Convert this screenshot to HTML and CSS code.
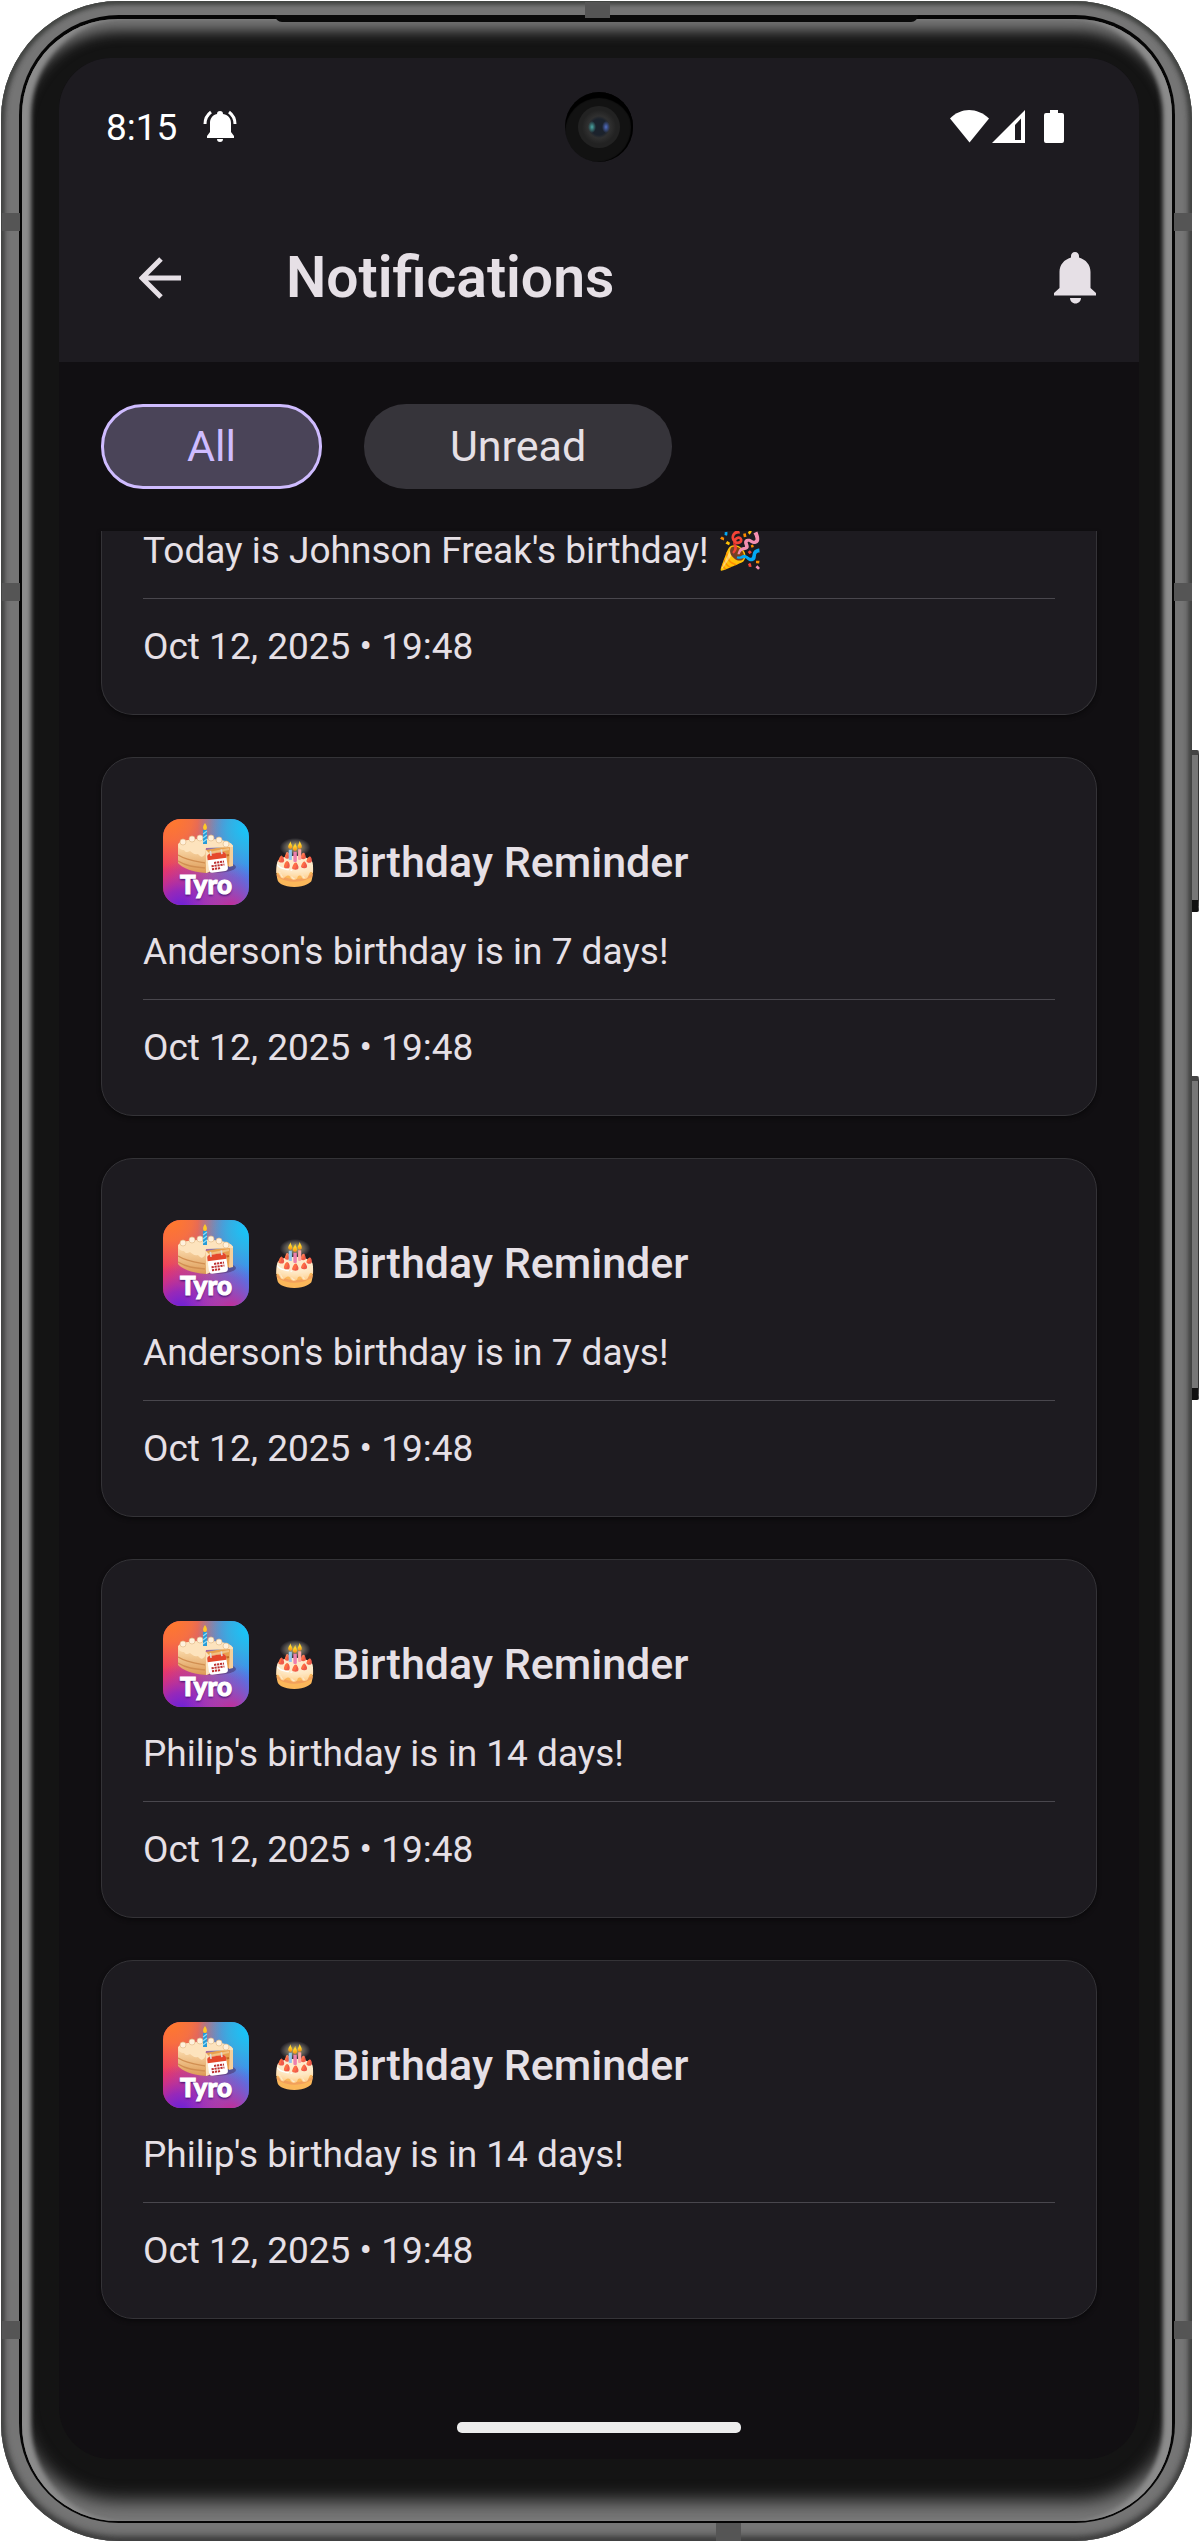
FILE: index.html
```html
<!DOCTYPE html>
<html lang="en">
<head>
<meta charset="utf-8">
<meta name="viewport" content="width=device-width, initial-scale=1">
<title>Notifications</title>
<link rel="stylesheet" href="styles.css">
</head>
<body>
<svg class="sprite" aria-hidden="true">
  <defs>
    <linearGradient id="bg" x1="0" y1="0" x2="1" y2="0"><stop offset="0" stop-color="#f0385e"/><stop offset=".5" stop-color="#b0569c"/><stop offset="1" stop-color="#3f86f0"/></linearGradient>
    <radialGradient id="orange" cx=".1" cy="0" r=".6"><stop offset="0" stop-color="#ff7a2c"/><stop offset=".4" stop-color="#ff7a34" stop-opacity=".8"/><stop offset="1" stop-color="#ff7a34" stop-opacity="0"/></radialGradient>
    <radialGradient id="cyan" cx="1" cy=".1" r=".6"><stop offset="0" stop-color="#14c8fa"/><stop offset=".4" stop-color="#28bce8" stop-opacity=".8"/><stop offset="1" stop-color="#28bce8" stop-opacity="0"/></radialGradient>
    <radialGradient id="violet" cx=".2" cy="1.05" r=".55"><stop offset="0" stop-color="#6420dc"/><stop offset=".4" stop-color="#8422cc" stop-opacity=".8"/><stop offset="1" stop-color="#b428b4" stop-opacity="0"/></radialGradient>
    <radialGradient id="magenta" cx=".8" cy="1.05" r=".55"><stop offset="0" stop-color="#cc2890"/><stop offset="1" stop-color="#8c3ad0" stop-opacity="0"/></radialGradient>
    <linearGradient id="sponge" x1="0" y1="0" x2="0" y2="1"><stop offset="0" stop-color="#fbdcae"/><stop offset="1" stop-color="#dd9a55"/></linearGradient>
  </defs>
  <symbol id="app" viewBox="0 0 86 86">
    <rect width="86" height="86" rx="18" fill="url(#bg)"/>
    <rect width="86" height="86" rx="18" fill="url(#orange)"/>
    <rect width="86" height="86" rx="18" fill="url(#cyan)"/>
    <rect width="86" height="86" rx="18" fill="url(#violet)"/>
    <rect width="86" height="86" rx="18" fill="url(#magenta)"/>
    <ellipse cx="50" cy="48" rx="23" ry="6" fill="#3c1840" opacity=".4"/>
    <path d="M15 27v17c4 5 14 9 28 10V31z" fill="url(#sponge)"/>
    <path d="M15 36c8 5 16 6 27 8M15 42c8 5 16 6 27 7" stroke="#d18f52" stroke-width="1.4" fill="none"/>
    <path d="M43 31l27-5v20l-27 8z" fill="#e8a04e"/>
    <path d="M43 31v23l3-1V34z" fill="#fbe3bd"/>
    <path d="M67 27l3-1v21l-4 1z" fill="#f6cf9a"/>
    <path d="M46 34l20-4" stroke="#f2c283" stroke-width="2"/>
    <path d="M46 40l20-4" stroke="#c46a24" stroke-width="2"/>
    <path d="M15 26c0-8 56-9 55 2L43 29l-1 6c-3 5-5 2-7 0-4 1-5-1-8-3-3 2-5 1-6-1-3 0-6-2-6-5z" fill="#fde3bd"/>
    <g fill="#fff1dc" stroke="#e4bd8b" stroke-width=".7"><circle cx="20" cy="23" r="3"/><circle cx="29" cy="20" r="3"/><circle cx="37" cy="19" r="3"/><circle cx="48" cy="19" r="3"/><circle cx="56" cy="21" r="3"/><circle cx="63" cy="25" r="3"/></g>
    <rect x="40" y="11" width="4" height="14" fill="#299bd6"/>
    <path d="M40 15l4-3M40 19l4-3M40 23l4-3" stroke="#8edcf6" stroke-width="1.2"/>
    <path d="M42 4c3 4 2 7 0 7s-3-3 0-7z" fill="#ffc928"/>
    <g transform="rotate(-8 54 43)">
      <rect x="45" y="34" width="19" height="19" rx="3" fill="#fff"/>
      <path d="M45 40v-3c0-2 1-3 3-3h13c2 0 3 1 3 3v3z" fill="#e5482c"/>
      <path d="M49 31v5M60 31v5" stroke="#ddd" stroke-width="1.6"/>
      <path d="M51 43.500h10M48 46.500h13M48 49.500h9" stroke="#bd3030" stroke-width="2" stroke-dasharray="2.200 .8"/>
    </g>
  </symbol>
  <symbol id="bell" viewBox="0 0 44 54">
    <path d="M22 1c-2.500 0-4 2-4 4v1.500C11 8.500 6.500 14 6.500 21v16L1 42v2.500h42V42l-5.500-5V21c0-7-4.500-12.500-11.500-14.500V5c0-2-1.500-4-4-4zM17 47h11c0 3-2.500 5.500-5.500 5.500S17 50 17 47z" fill="currentColor"/>
  </symbol>
</svg>

<div class="phone">
  <span class="key key-power"></span>
  <span class="key key-volume"></span>
  <i class="band band-bottom"></i>
  <i class="band side left high"></i><i class="band side right high"></i>
  <i class="band side left mid"></i><i class="band side right mid"></i>
  <i class="band side left low"></i><i class="band side right low"></i>
  <div class="rim"><div class="glass"><div class="screen">
    <span class="camera"><i class="lens"></i></span>
    <header class="top">
      <div class="status">
        <span>8:15</span>
        <svg class="ring" viewBox="0 0 34 34" fill="#fff"><path d="M17 1c-2 0-3 1-3 3C9 5 7 9 7 13v9l-3 4v2h27v-2l-3-4v-9c0-4-2-8-8-9 0-2-1-3-3-3zM14 29h6c0 2-1 3-3 3s-3-1-3-3z"/><path d="M8 2C4 5 2 9 2 14M26 2c4 3 6 7 6 12" fill="none" stroke="#fff" stroke-width="3"/></svg>
        <svg class="signals" viewBox="0 0 116 36" fill="#fff"><path d="M1 9.500C12-2 28-2 40 9.500L20.500 33.500z"/><path fill-rule="evenodd" d="M43 34L76 1v33zM66 16v15h6V9.500z"/><path d="M101 1h8v3h4q2 0 2 2v26q0 2-2 2H97q-2 0-2-2V6q0-2 2-2h4z"/></svg>
      </div>
      <div class="appbar">
        <button class="icon-button" aria-label="Back"><svg class="back" viewBox="0 0 42 42"><path d="M42 21H4M22 2L3 21l19 19" fill="none" stroke="currentColor" stroke-width="5"/></svg></button>
        <h1>Notifications</h1>
        <button class="icon-button" aria-label="Alerts"><svg class="bell"><use href="#bell"/></svg></button>
      </div>
    </header>
    <nav class="chips">
      <button class="chip selected" aria-pressed="true">All</button>
      <button class="chip" aria-pressed="false">Unread</button>
    </nav>
    <main class="list">
      <article class="card scrolled">
        <p>Today is Johnson Freak's birthday! <span class="emoji">🎉</span></p>
        <time datetime="2025-10-12T19:48">Oct 12, 2025 • 19:48</time>
      </article>
      <article class="card">
        <header><div class="app"><svg><use href="#app"/></svg><span class="brand">Tyro</span></div><h2><span class="emoji">🎂</span> Birthday Reminder</h2></header>
        <p>Anderson's birthday is in 7 days!</p>
        <time datetime="2025-10-12T19:48">Oct 12, 2025 • 19:48</time>
      </article>
      <article class="card">
        <header><div class="app"><svg><use href="#app"/></svg><span class="brand">Tyro</span></div><h2><span class="emoji">🎂</span> Birthday Reminder</h2></header>
        <p>Anderson's birthday is in 7 days!</p>
        <time datetime="2025-10-12T19:48">Oct 12, 2025 • 19:48</time>
      </article>
      <article class="card">
        <header><div class="app"><svg><use href="#app"/></svg><span class="brand">Tyro</span></div><h2><span class="emoji">🎂</span> Birthday Reminder</h2></header>
        <p>Philip's birthday is in 14 days!</p>
        <time datetime="2025-10-12T19:48">Oct 12, 2025 • 19:48</time>
      </article>
      <article class="card">
        <header><div class="app"><svg><use href="#app"/></svg><span class="brand">Tyro</span></div><h2><span class="emoji">🎂</span> Birthday Reminder</h2></header>
        <p>Philip's birthday is in 14 days!</p>
        <time datetime="2025-10-12T19:48">Oct 12, 2025 • 19:48</time>
      </article>
    </main>
    <footer class="gesture"><span class="handle"></span></footer>
  </div></div></div>
  <i class="earpiece"></i>
  <i class="band band-top"></i>
</div>
</body>
</html>
```
FILE: styles.css
```css
* { box-sizing: border-box; }
body { margin: 0; padding: 1px 8px 1px 1px; background: #fff; font-family: Roboto, sans-serif; color: #e6e0e6; }
h1, h2, p { margin: 0; font-weight: 500; }
button { font: inherit; color: inherit; border: 0; padding: 0; background: none; }
svg { display: block; flex: none; }
.sprite { position: absolute; width: 0; height: 0; }

/* Device body */
.phone { position: relative; padding: 14px 17px 18px 18px; border-radius: 118px; background: #757575; box-shadow: inset 0 3px 5px #424542, inset 3px 0 5px #444, inset -3px 0 5px #444, inset 0 -4px 8px #333; }
.rim { padding: 4px 3px 2px 3px; border-radius: 100px; background: #050505; }
.glass { padding: 39px 33px 62px 37px; border-radius: 96px; background: #141414; box-shadow: inset 11px 0 4px -2px #8c8c8c, inset -11px 0 4px -2px #8c8c8c, inset 0 14px 14px -2px #777, inset 0 -24px 18px -4px #777; }
.screen { position: relative; border-radius: 52px; background: #110f12; overflow: hidden; }
.earpiece { position: absolute; top: 14px; left: 23%; right: 23%; height: 7px; border-radius: 0 0 12px 12px; background: #0a0a0a; }
.band { position: absolute; background: #555; }
.band-top { top: 1px; left: 49%; width: 25px; height: 16px; }
.band-bottom { bottom: 0; left: 60%; width: 25px; height: 18px; }
.side { width: 18px; height: 18px; }
.left { left: 1px; }
.right { right: 0; }
.high { top: 212px; }
.mid { top: 582px; }
.low { bottom: 202px; }
.key { position: absolute; left: 100%; width: 7px; background: #777; border-top: 5px solid #444; border-bottom: 12px solid #111; border-right: 1px solid #333; border-radius: 0 2px 2px 0; }
.key-power { top: 749px; height: 162px; }
.key-volume { top: 1075px; height: 324px; }
.camera { position: absolute; top: 34px; left: calc(50% - 34px); display: grid; place-items: center; width: 68px; height: 70px; border-radius: 50%; background: #121212; box-shadow: inset 0 6px 1px #000, inset -2px 0 1px #000; }
.lens { width: 42px; height: 42px; border-radius: 50%; background: radial-gradient(ellipse 4px 6px at 14px 50%, #4ba8a4, transparent), radial-gradient(ellipse 4px 6px at 28px 50%, #526ec4, transparent), radial-gradient(circle, #1b222c 8px, #303030 11px, #222 17px); }

/* Header */
.top { background: #1d1b20; }
.status { display: flex; align-items: center; height: 136px; padding: 2px 74px 0 47px; font-size: 37px; }
.status span { color: #fff; }
.ring { width: 34px; height: 34px; margin-left: 26px; }
.signals { width: 116px; height: 36px; margin-left: auto; }
.appbar { display: flex; align-items: center; height: 168px; padding: 0 42px 0 80px; }
.appbar h1 { flex: 1; margin-left: 105px; font-size: 57px; font-weight: 600; line-height: 74px; }
.icon-button { display: block; }
.back { width: 42px; height: 42px; }
.bell { width: 44px; height: 54px; }

/* Filters */
.chips { display: flex; gap: 42px; padding: 42px; }
.chip { height: 85px; padding: 0 86px; border-radius: 42px; background: #36343a; font-size: 43px; line-height: 63px; }
.chip.selected { background: #4a4458; border: 3px solid #cfbcff; padding: 0 83px; color: #cfbcff; }

/* Notification list */
.list { display: flex; flex-direction: column; gap: 42px; padding: 0 42px; }
.card { display: flex; flex-direction: column; padding: 41px; border: 1px solid #343337; border-radius: 32px; background: #1d1b20; box-shadow: 0 2px 4px #0a090b; }
.card header { display: flex; align-items: center; gap: 19px; padding: 20px; }
.card h2 { font-size: 43px; line-height: 63px; white-space: nowrap; }
.card p, .card time { font-size: 37px; line-height: 53px; font-weight: 400; white-space: nowrap; }
.card time { margin-top: 21px; padding-top: 21px; border-top: 1px solid #49474d; }
.emoji { font-family: "Noto Color Emoji", Roboto, sans-serif; }

/* Card partly scrolled under the filters */
.scrolled { padding-top: 0; border-top: 0; border-radius: 0 0 32px 32px; overflow: hidden; }
.scrolled p { margin-top: -7px; }

/* App icon with its wordmark */
.app { position: relative; flex: none; }
.app svg { width: 86px; height: 86px; }
.brand { position: absolute; left: 0; right: 0; bottom: 6px; text-align: center; font: 900 26px/30px Lato, sans-serif; color: #fff; -webkit-text-stroke: 1px #fff; text-shadow: 0 2px 2px #50187c; }

.gesture { display: flex; justify-content: center; align-items: flex-end; height: 140px; padding-bottom: 26px; }
.handle { width: 284px; height: 11px; border-radius: 5px; background: #ececec; }
```
